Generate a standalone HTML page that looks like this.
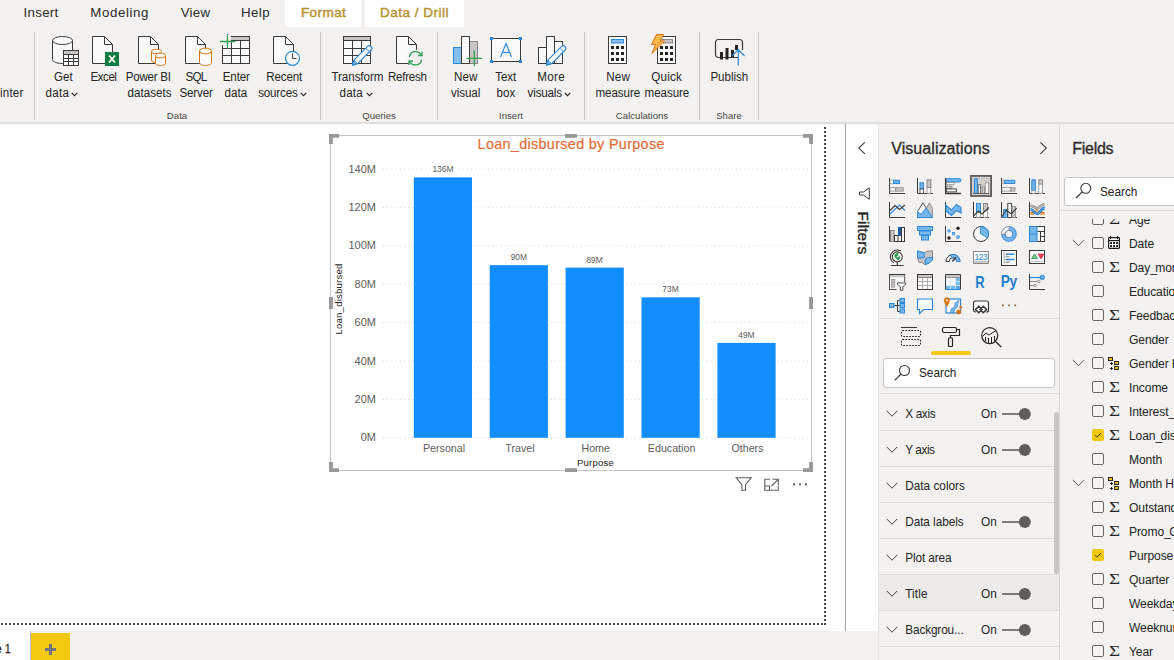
<!DOCTYPE html>
<html lang="en">
<head>
<meta charset="utf-8">
<title>Power BI Desktop</title>
<style>
*{box-sizing:border-box;margin:0;padding:0}
html,body{width:1174px;height:660px;overflow:hidden;background:#fff}
body{position:relative;font-family:"Liberation Sans",sans-serif;color:#252423;font-size:11.6px}
.abs{position:absolute}
.c{position:absolute;transform:translateX(-50%);white-space:nowrap;text-align:center}
.t{position:absolute;white-space:nowrap}
/* ribbon */
#ribbon{left:0;top:0;width:1174px;height:122px;background:#f3f2f1}
#ribbonline{left:0;top:121.7px;width:1174px;height:2.3px;background:#dfdedd}
.tab{position:absolute;top:4.8px;font-size:13.3px;color:#2b2a29;white-space:nowrap}
.tabw{position:absolute;top:0;height:27px;background:#fff}
.gold{color:#b5932f;font-size:13.5px;-webkit-text-stroke:0.45px #b5932f}
.rb{position:absolute;transform:translateX(-50%);white-space:nowrap;text-align:center;top:69px;line-height:16px;font-size:11.6px;color:#252423}
.rl{position:absolute;white-space:nowrap;font-size:11.6px;line-height:16px;color:#252423;transform:scaleY(1.07);transform-origin:0 76%}
.sep{position:absolute;top:32px;width:1px;height:88px;background:#c8c6c4}
.grp{position:absolute;transform:translateX(-50%);top:110px;font-size:9.6px;color:#484644;white-space:nowrap}
.dd{display:inline-block;vertical-align:0px;margin-left:0px}
.hd{font-size:16px;-webkit-text-stroke:0.32px #2d2c2b;color:#2d2c2b}
.fr{font-size:11.8px;line-height:14px;color:#252423;transform:scaleY(1.07);transform-origin:0 76%}
.fl{font-size:12.1px;line-height:15px;color:#252423;letter-spacing:-0.12px;transform:scaleY(1.06);transform-origin:0 76%}
.sg{font-family:"Liberation Serif","DejaVu Serif",serif;font-size:13.7px;line-height:18px;color:#252423;transform:scaleX(1.4);transform-origin:0 50%}
#s1,#s2{transform:scaleY(1.07);transform-origin:0 76%}
</style>
</head>
<body>
<!-- RIBBON -->
<div id="ribbon" class="abs"></div>
<div id="ribbonline" class="abs"></div>
<div class="tabw" style="left:285px;width:76px"></div>
<div class="tabw" style="left:365px;width:99px"></div>
<div class="tab" style="left:23.6px;letter-spacing:0.27px">Insert</div>
<div class="tab" style="left:90.3px;letter-spacing:0.60px">Modeling</div>
<div class="tab" style="left:180.7px;letter-spacing:0.28px">View</div>
<div class="tab" style="left:240.9px;letter-spacing:0.46px">Help</div>
<div class="tab gold" style="left:300.9px;letter-spacing:0.44px">Format</div>
<div class="tab gold" style="left:380.0px;letter-spacing:0.51px">Data / Drill</div>

<div class="t" style="left:0;top:84.7px;font-size:11.6px;line-height:16px;letter-spacing:0.2px;transform:scaleY(1.07);transform-origin:0 76%">inter</div>
<div class="sep" style="left:34px"></div>
<div class="sep" style="left:320px"></div>
<div class="sep" style="left:437px"></div>
<div class="sep" style="left:584px"></div>
<div class="sep" style="left:699px"></div>
<div class="sep" style="left:758px"></div>
<!--RL-START-->
<div class="rl" style="left:54.0px;top:69px;letter-spacing:0.04px">Get</div>
<div class="rl" style="left:45.5px;top:84.7px;letter-spacing:0.26px">data</div>
<svg class="abs" style="left:71.3px;top:91.9px" width="7" height="5" viewBox="0 0 7 5"><path d="M0.7 0.8L3.5 3.6L6.3 0.8" fill="none" stroke="#252423" stroke-width="1.15"/></svg>
<div class="rl" style="left:90.6px;top:69px;letter-spacing:-0.51px">Excel</div>
<div class="rl" style="left:125.8px;top:69px;letter-spacing:-0.28px">Power BI</div>
<div class="rl" style="left:127.6px;top:84.7px;letter-spacing:0.01px">datasets</div>
<div class="rl" style="left:185.5px;top:69px;letter-spacing:-0.77px">SQL</div>
<div class="rl" style="left:179.4px;top:84.7px;letter-spacing:-0.14px">Server</div>
<div class="rl" style="left:222.8px;top:69px;letter-spacing:-0.16px">Enter</div>
<div class="rl" style="left:224.5px;top:84.7px;letter-spacing:0.06px">data</div>
<div class="rl" style="left:266.3px;top:69px;letter-spacing:-0.14px">Recent</div>
<div class="rl" style="left:258.2px;top:84.7px;letter-spacing:-0.17px">sources</div>
<svg class="abs" style="left:300.4px;top:91.9px" width="7" height="5" viewBox="0 0 7 5"><path d="M0.7 0.8L3.5 3.6L6.3 0.8" fill="none" stroke="#252423" stroke-width="1.15"/></svg>
<div class="rl" style="left:331.5px;top:69px;letter-spacing:-0.07px">Transform</div>
<div class="rl" style="left:339.6px;top:84.7px;letter-spacing:0.16px">data</div>
<svg class="abs" style="left:365.6px;top:91.9px" width="7" height="5" viewBox="0 0 7 5"><path d="M0.7 0.8L3.5 3.6L6.3 0.8" fill="none" stroke="#252423" stroke-width="1.15"/></svg>
<div class="rl" style="left:387.9px;top:69px;letter-spacing:-0.26px">Refresh</div>
<div class="rl" style="left:454.0px;top:69px;letter-spacing:0.03px">New</div>
<div class="rl" style="left:450.9px;top:84.7px;letter-spacing:-0.04px">visual</div>
<div class="rl" style="left:495.2px;top:69px;letter-spacing:-0.09px">Text</div>
<div class="rl" style="left:496.4px;top:84.7px;letter-spacing:0.13px">box</div>
<div class="rl" style="left:537.3px;top:69px;letter-spacing:0.34px">More</div>
<div class="rl" style="left:527.6px;top:84.7px;letter-spacing:-0.16px">visuals</div>
<svg class="abs" style="left:564.3px;top:91.9px" width="7" height="5" viewBox="0 0 7 5"><path d="M0.7 0.8L3.5 3.6L6.3 0.8" fill="none" stroke="#252423" stroke-width="1.15"/></svg>
<div class="rl" style="left:606.3px;top:69px;letter-spacing:0.13px">New</div>
<div class="rl" style="left:595.5px;top:84.7px;letter-spacing:-0.07px">measure</div>
<div class="rl" style="left:651.3px;top:69px;letter-spacing:0.21px">Quick</div>
<div class="rl" style="left:644.6px;top:84.7px;letter-spacing:-0.07px">measure</div>
<div class="rl" style="left:710.4px;top:69px;letter-spacing:-0.03px">Publish</div>
<!--RL-END-->
<div class="grp" style="left:177px">Data</div>
<div class="grp" style="left:379px">Queries</div>
<div class="grp" style="left:511px">Insert</div>
<div class="grp" style="left:642px">Calculations</div>
<div class="grp" style="left:729px">Share</div>
<!--RIBBON-ICONS-START-->
<svg class="abs" style="left:0;top:0" width="1174" height="122" viewBox="0 0 1174 122" fill="none" stroke-linejoin="miter">
<defs>
<g id="page"><path d="M0.5 0.5H12.5L20.5 8.5V27.5H0.5Z" fill="#fafafa" stroke="#3b3a39" stroke-width="1"/><path d="M12.5 0.5V8.5H20.5" stroke="#3b3a39" stroke-width="1" fill="none"/></g>
<g id="pencil"><path d="M0 20L1.400 15L15.200 1.200A2.550 2.550 0 0 1 18.800 4.800L5 18.600Z" fill="#fafafa" stroke="#2b88d8" stroke-width="1.100" stroke-linejoin="round"/><path d="M0 20L1.400 15L5 18.600Z" fill="#69afe5" stroke="#2b88d8" stroke-width="1" stroke-linejoin="round"/><path d="M13.400 3L17 6.600" stroke="#2b88d8" stroke-width="1"/></g>
<g id="calcdots" fill="#252423" stroke="none"><rect x="0" y="0" width="3" height="3"/><rect x="5" y="0" width="3" height="3"/><rect x="10" y="0" width="3" height="3"/><rect x="0" y="6" width="3" height="3"/><rect x="5" y="6" width="3" height="3"/><rect x="10" y="6" width="3" height="3"/><rect x="0" y="12" width="3" height="3"/><rect x="5" y="12" width="3" height="3"/><rect x="10" y="12" width="3" height="3"/></g>
</defs>
<!-- Get data -->
<path d="M52.5 40.5V59.5C52.5 61.8 57 63.5 62.5 63.5S72.5 61.8 72.5 59.5V40.5" fill="#fafafa" stroke="#3b3a39"/>
<ellipse cx="62.5" cy="40.5" rx="10" ry="4" fill="#fafafa" stroke="#3b3a39"/>
<rect x="63.5" y="50.5" width="15" height="15" fill="#fafafa" stroke="#3b3a39"/>
<rect x="64" y="51" width="14" height="3" fill="#c8c6c4" stroke="none"/>
<path d="M63.5 54.5H78.5M63.5 58.5H78.5M63.5 61.5H78.5M68.5 54.5V65.5M73.5 54.5V65.5" stroke="#3b3a39"/>
<!-- Excel -->
<use href="#page" x="92" y="36"/>
<rect x="105" y="52" width="14" height="14" fill="#107c41" stroke="none"/>
<path d="M109 55.5L115 62.5M115 55.5L109 62.5" stroke="#fff" stroke-width="1.8"/>
<!-- Power BI datasets -->
<use href="#page" x="138" y="36"/>
<g stroke="#d87514" fill="#fafafa">
<path d="M151.500 52V60.500C151.500 61.600 153.500 62.500 156.500 62.500"/><ellipse cx="156.500" cy="51.500" rx="5" ry="2.200"/>
<path d="M155.500 56V63.500C155.500 64.700 157.700 65.500 160.500 65.500S165.500 64.700 165.500 63.500V56"/><ellipse cx="160.500" cy="55.500" rx="5" ry="2.300"/>
</g>
<!-- SQL Server -->
<use href="#page" x="185" y="36"/>
<g stroke="#d87514" fill="#fafafa"><path d="M199.500 51V62.500C199.500 64.200 202.200 65.500 205.500 65.500S211.500 64.200 211.500 62.500V51"/><ellipse cx="205.500" cy="51" rx="6" ry="2.800"/></g>
<!-- Enter data -->
<rect x="222.500" y="36.500" width="27" height="27" fill="#fafafa" stroke="#3b3a39"/>
<rect x="231" y="37" width="18" height="3.500" fill="#c8c6c4" stroke="none"/>
<path d="M222.500 40.500H249.500M222.500 48.500H249.500M222.500 55.500H249.500M231.500 40.500V63.500M240.500 40.500V63.500" stroke="#3b3a39"/>
<rect x="219" y="33" width="12" height="12" fill="#f3f2f1" stroke="none"/>
<path d="M220 41.500H235.500M227.500 34V48.500" stroke="#2f9e4f" stroke-width="1.300"/>
<!-- Recent sources -->
<use href="#page" x="273" y="36"/>
<circle cx="292.500" cy="58.300" r="7" fill="#fafafa" stroke="#2b88d8" stroke-width="1.200"/>
<path d="M292.500 53.500V58.500H296.500" stroke="#3b3a39"/>
<!-- Transform data -->
<rect x="343.500" y="36.500" width="27" height="27" fill="#fafafa" stroke="#3b3a39"/>
<rect x="344" y="37" width="26" height="3.500" fill="#c8c6c4" stroke="none"/>
<path d="M343.500 40.500H370.500M343.500 48.500H370.500M343.500 55.500H370.500M352.500 40.500V63.500M361.500 40.500V63.500" stroke="#3b3a39"/>
<use href="#pencil" x="352.400" y="45.200"/>
<!-- Refresh -->
<use href="#page" x="396" y="36"/>
<circle cx="415.500" cy="58.300" r="8.500" fill="#f3f2f1" stroke="none"/>
<path d="M409.300 57A6.400 6.400 0 0 1 421.500 55.500" stroke="#2f9e4f" stroke-width="1.300"/>
<path d="M421.700 59.600A6.400 6.400 0 0 1 409.500 61.100" stroke="#2f9e4f" stroke-width="1.300"/>
<path d="M418 55.500H422V51.500" stroke="#2f9e4f" stroke-width="1.300"/>
<path d="M413 61H409V65" stroke="#2f9e4f" stroke-width="1.300"/>
<!-- New visual -->
<rect x="469.500" y="41.500" width="8" height="22" fill="#c8c6c4" stroke="#8a8886"/>
<rect x="453.500" y="47.500" width="8.500" height="16" fill="#83beec" stroke="#2b88d8"/>
<rect x="461.500" y="36.500" width="8" height="27" fill="#fafafa" stroke="#3b3a39"/>
<path d="M466.500 58.300H482M474.300 50.500V66" stroke="#2f9e4f" stroke-width="1.300"/>
<!-- Text box -->
<rect x="491.500" y="38.500" width="29" height="23" fill="#fafafa" stroke="#3b3a39"/>
<g fill="#2b88d8" stroke="none"><rect x="490" y="37" width="3" height="3"/><rect x="519" y="37" width="3" height="3"/><rect x="490" y="60" width="3" height="3"/><rect x="519" y="60" width="3" height="3"/></g>
<path d="M500.500 57L506 43.500L511.500 57M502.500 52.500H509.500" stroke="#2b88d8" stroke-width="1.200"/>
<!-- More visuals -->
<rect x="538.500" y="47.500" width="8" height="16" fill="#fafafa" stroke="#3b3a39"/>
<rect x="554.500" y="41.500" width="8" height="22" fill="#fafafa" stroke="#3b3a39"/>
<rect x="546.500" y="36.500" width="8" height="27" fill="#fafafa" stroke="#3b3a39"/>
<use href="#pencil" x="546.400" y="45.200"/>
<!-- New measure -->
<rect x="608.500" y="36.500" width="18" height="27" fill="#fafafa" stroke="#3b3a39"/>
<rect x="611.500" y="39.500" width="12" height="3.500" fill="#83beec" stroke="#2b88d8"/>
<use href="#calcdots" x="611" y="46"/>
<!-- Quick measure -->
<rect x="657.500" y="36.500" width="18" height="27" fill="#fafafa" stroke="#3b3a39"/>
<rect x="660.500" y="39.500" width="12" height="3.500" fill="#c8c6c4" stroke="#8a8886"/>
<use href="#calcdots" x="660" y="46"/>
<path d="M656.500 34.500H663.500L660 41H664.500L652 53.500L655.500 44.500H651.500Z" fill="#f8b64c" stroke="#d87514" stroke-width="1"/>
<!-- Publish -->
<path d="M738 57.500H718.500a3 3 0 0 1 -3 -3V42.500a3 3 0 0 1 3 -3H739.500a3 3 0 0 1 3 3V50" stroke="#3b3a39" stroke-width="1.200"/>
<g fill="#252423" stroke="none"><rect x="720" y="52" width="3" height="7.500"/><rect x="725.500" y="48" width="3" height="11.500"/><rect x="731" y="50" width="3" height="7"/><rect x="735" y="45" width="3" height="5"/></g>
<path d="M738.300 65.500V50M732 56L738.300 49.700L744.600 56" stroke="#2b88d8" stroke-width="1.200"/>
</svg>
<!--RIBBON-ICONS-END-->

<!--CANVAS-START-->
<div class="abs" style="left:0;top:124px;width:846px;height:507px;background:#fff"></div>
<div class="abs" style="left:824px;top:127px;width:2px;height:498px;background:repeating-linear-gradient(180deg,#444 0,#444 2px,transparent 2px,transparent 4px)"></div>
<div class="abs" style="left:-3px;top:623px;width:826px;height:2px;background:repeating-linear-gradient(90deg,#444 0,#444 2px,transparent 2px,transparent 4px)"></div>
<div class="abs" style="left:845px;top:124px;width:1px;height:507px;background:#a19f9d"></div>
<svg class="abs" style="left:0;top:124px" width="846" height="507" viewBox="0 124 846 507" font-family="'Liberation Sans',sans-serif">
<rect x="330.5" y="135.5" width="481" height="335" fill="#fff" stroke="#c4c4c4" stroke-width="1"/>
<line x1="383" x2="808" y1="437.8" y2="437.8" stroke="#d9d8d6" stroke-width="1" stroke-dasharray="1 3.2"/>
<text x="376" y="441.2" text-anchor="end" font-size="11" fill="#605e5c">0M</text>
<line x1="383" x2="808" y1="399.4" y2="399.4" stroke="#d9d8d6" stroke-width="1" stroke-dasharray="1 3.2"/>
<text x="376" y="402.8" text-anchor="end" font-size="11" fill="#605e5c">20M</text>
<line x1="383" x2="808" y1="361.0" y2="361.0" stroke="#d9d8d6" stroke-width="1" stroke-dasharray="1 3.2"/>
<text x="376" y="365" text-anchor="end" font-size="11" fill="#605e5c">40M</text>
<line x1="383" x2="808" y1="322.6" y2="322.6" stroke="#d9d8d6" stroke-width="1" stroke-dasharray="1 3.2"/>
<text x="376" y="326.0" text-anchor="end" font-size="11" fill="#605e5c">60M</text>
<line x1="383" x2="808" y1="284.2" y2="284.2" stroke="#d9d8d6" stroke-width="1" stroke-dasharray="1 3.2"/>
<text x="376" y="287.6" text-anchor="end" font-size="11" fill="#605e5c">80M</text>
<line x1="383" x2="808" y1="245.8" y2="245.8" stroke="#d9d8d6" stroke-width="1" stroke-dasharray="1 3.2"/>
<text x="376" y="249.2" text-anchor="end" font-size="11" fill="#605e5c">100M</text>
<line x1="383" x2="808" y1="207.4" y2="207.4" stroke="#d9d8d6" stroke-width="1" stroke-dasharray="1 3.2"/>
<text x="376" y="210.8" text-anchor="end" font-size="11" fill="#605e5c">120M</text>
<line x1="383" x2="808" y1="169.0" y2="169.0" stroke="#d9d8d6" stroke-width="1" stroke-dasharray="1 3.2"/>
<text x="376" y="173" text-anchor="end" font-size="11" fill="#605e5c">140M</text>
<rect x="413.8" y="177.40" width="58.2" height="260.40" fill="#118dff"/>
<rect x="429.9" y="164.4" width="26" height="10" fill="#fff"/><text x="442.9" y="172.4" text-anchor="middle" font-size="8.4" fill="#605e5c">136M</text>
<text x="444.0" y="452" text-anchor="middle" font-size="10.7" fill="#605e5c">Personal</text>
<rect x="489.7" y="265.15" width="58.2" height="172.65" fill="#118dff"/>
<rect x="505.8" y="252.1" width="26" height="10" fill="#fff"/><text x="518.8" y="260.1" text-anchor="middle" font-size="8.4" fill="#605e5c">90M</text>
<text x="519.9" y="452" text-anchor="middle" font-size="10.7" fill="#605e5c">Travel</text>
<rect x="565.6" y="267.60" width="58.2" height="170.20" fill="#118dff"/>
<rect x="581.6" y="254.6" width="26" height="10" fill="#fff"/><text x="594.6" y="262.6" text-anchor="middle" font-size="8.4" fill="#605e5c">89M</text>
<text x="595.7" y="452" text-anchor="middle" font-size="10.7" fill="#605e5c">Home</text>
<rect x="641.5" y="297.30" width="58.2" height="140.50" fill="#118dff"/>
<rect x="657.5" y="284.3" width="26" height="10" fill="#fff"/><text x="670.5" y="292.3" text-anchor="middle" font-size="8.4" fill="#605e5c">73M</text>
<text x="671.6" y="452" text-anchor="middle" font-size="10.7" fill="#605e5c">Education</text>
<rect x="717.4" y="342.90" width="58.2" height="94.90" fill="#118dff"/>
<rect x="733.4" y="329.9" width="26" height="10" fill="#fff"/><text x="746.4" y="337.9" text-anchor="middle" font-size="8.4" fill="#605e5c">49M</text>
<text x="747.5" y="452" text-anchor="middle" font-size="10.7" fill="#605e5c">Others</text>
<text x="595.5" y="466.3" text-anchor="middle" font-size="9.6" fill="#252423" letter-spacing="0.2">Purpose</text>
<text transform="translate(341.8,299) rotate(-90)" text-anchor="middle" font-size="9.6" fill="#252423" letter-spacing="0.2">Loan_disbursed</text>
<text x="571.2" y="148.9" text-anchor="middle" font-size="14.4" fill="#e66c37" letter-spacing="0.32" stroke="#e66c37" stroke-width="0.2">Loan_disbursed by Purpose</text>
<g fill="#999999">
<path d="M329 134h10v3.800h-6.100v6.100h-3.900z"/>
<path d="M813 134h-10v3.800h6.100v6.100h3.900z"/>
<path d="M329 472h10v-3.800h-6.100v-6.100h-3.900z"/>
<path d="M813 472h-10v-3.800h6.100v-6.100h3.900z"/>
<rect x="565" y="134" width="12" height="3.800"/>
<rect x="565" y="468.200" width="12" height="3.800"/>
<rect x="329" y="297" width="3.900" height="12"/>
<rect x="809.100" y="297" width="3.900" height="12"/>
</g>
<g fill="none" stroke="#605e5c" stroke-width="1.1">
<path d="M736.2 477.8H751.2L745.5 484.6V490.3H741.9V484.6Z"/>
<path d="M770 479.3H764.8V490.3H778.3V485.5M764.8 486H769.5V490.3M772.5 479.3H778.3V485M778.3 479.3L771.5 486"/>
</g>
<g fill="#605e5c"><rect x="793" y="483.3" width="2" height="2"/><rect x="799" y="483.3" width="2" height="2"/><rect x="805" y="483.3" width="2" height="2"/></g>
</svg>
<!--CANVAS-END-->

<!--PANES-START-->
<div class="abs" style="left:846px;top:124px;width:32px;height:507px;background:#fff"></div>
<div class="abs" style="left:878px;top:124px;width:296px;height:536px;background:#f3f2f1"></div>
<div class="abs" style="left:878px;top:124px;width:1px;height:536px;background:#e6e5e3"></div>
<div class="abs" style="left:1059px;top:124px;width:1px;height:536px;background:#dddbd9"></div>
<svg class="abs" style="left:846px;top:124px" width="32" height="140" viewBox="846 124 32 140" fill="none"><path d="M864.800 142.300L858.800 148.100L864.800 153.900" stroke="#3b3a39" stroke-width="1.100"/><path d="M869.300 187.800V199.300L863.500 195H859.500V192H863.500Z" stroke="#3b3a39" stroke-width="1" stroke-linejoin="round"/></svg>
<div class="t" id="filters" style="left:862.500px;top:233px;font-size:15.500px;transform:translate(-50%,-50%) rotate(90deg);-webkit-text-stroke:0.350px #252423;letter-spacing:0.100px">Filters</div>
<div class="t hd" id="vizhd" style="left:891.200px;top:139.500px;letter-spacing:0.070px">Visualizations</div>
<svg class="abs" style="left:1036px;top:140px" width="14" height="16" viewBox="0 0 14 16" fill="none"><path d="M4.300 2.300L10.300 8.100L4.300 13.900" stroke="#3b3a39" stroke-width="1.100"/></svg>
<svg class="abs" style="left:880px;top:170px" width="178" height="150" viewBox="880 170 178 150" fill="none" shape-rendering="auto">
<g transform="translate(889,178)"><path d="M0.5 0V15.5H16" stroke="#3b3a39" fill="none"/><rect x="1" y="2" width="3.300" height="3.800" fill="#fafafa" stroke="#8a8886" stroke-width="0.600"/><rect x="4.500" y="2.300" width="6" height="3.200" fill="#77b7ec" stroke="#2b88d8" stroke-width="1.100"/><rect x="1" y="9.700" width="5.400" height="3.400" fill="#fafafa" stroke="#8a8886" stroke-width="0.800" /><rect x="6.800" y="9.700" width="7.400" height="3.400" fill="#c8c6c4" stroke="#8a8886" stroke-width="0.800"/></g>
<g transform="translate(917,178)"><path d="M0.5 0V15.5H16" stroke="#3b3a39" fill="none"/><rect x="3" y="4.800" width="3.400" height="6.200" fill="#77b7ec" stroke="#2b88d8" stroke-width="1.100"/><rect x="3" y="11" width="3.400" height="4.500" fill="#fafafa" stroke="#3b3a39" stroke-width="0.800"/><rect x="10" y="1.800" width="3.800" height="7.600" fill="#c8c6c4" stroke="#8a8886"/><rect x="10" y="9.400" width="3.800" height="6.100" fill="#fafafa" stroke="#8a8886" stroke-width="0.800"/></g>
<g transform="translate(945,178)"><rect x="1.300" y="0.700" width="14.400" height="3.200" rx="0.800" fill="#77b7ec" stroke="#2b88d8" stroke-width="1"/><rect x="1.300" y="4.400" width="8.300" height="2" fill="#fafafa" stroke="#8a8886" stroke-width="0.700"/><rect x="1.300" y="8" width="5.700" height="2.300" fill="#c8c6c4" stroke="#8a8886" stroke-width="0.800"/><rect x="1.300" y="11" width="10" height="2.900" fill="#fafafa" stroke="#3b3a39" stroke-width="0.900"/><path d="M0.600 0V15.500H16" stroke="#3b3a39" fill="none" stroke-width="1.300"/></g>
<g transform="translate(973,178)"><rect x="-2" y="-2.100" width="20.100" height="20.100" fill="#d0cecc" stroke="#5f5d5b" stroke-width="1.800"/><rect x="1.500" y="0.800" width="2.800" height="14.700" fill="#77b7ec" stroke="#2b88d8" stroke-width="1"/><rect x="5.200" y="6.800" width="2.500" height="8.700" fill="#fafafa" stroke="#3b3a39" stroke-width="0.700"/><rect x="9" y="8.800" width="2.600" height="6.700" fill="#c8c6c4" stroke="#8a8886" stroke-width="0.800"/><rect x="12.400" y="4.900" width="3" height="10.600" fill="#fafafa" stroke="#8a8886" stroke-width="0.700"/><path d="M0 15.500H16.200" stroke="#5f5d5b"/></g>
<g transform="translate(1001,178)"><path d="M0.5 0V15.5H16" stroke="#3b3a39" fill="none"/><rect x="1" y="2" width="2.100" height="3.800" fill="#fafafa" stroke="#8a8886" stroke-width="0.600"/><rect x="3.500" y="2.200" width="10.300" height="3.300" rx="0.600" fill="#77b7ec" stroke="#2b88d8" stroke-width="1.100"/><rect x="1" y="9.700" width="8.800" height="3.400" fill="#fafafa" stroke="#8a8886" stroke-width="0.800"/><rect x="10" y="9.700" width="4" height="3.400" fill="#c8c6c4" stroke="#8a8886" stroke-width="0.800"/></g>
<g transform="translate(1029,178)"><path d="M0.5 0V15.5H16" stroke="#3b3a39" fill="none"/><rect x="2.800" y="1.900" width="3.500" height="10.700" rx="0.500" fill="#77b7ec" stroke="#2b88d8" stroke-width="1.100"/><rect x="2.800" y="12.800" width="3.500" height="2.700" fill="#fafafa" stroke="#8a8886" stroke-width="0.700"/><rect x="9.800" y="1.800" width="3.800" height="4.400" fill="#c8c6c4" stroke="#8a8886" stroke-width="0.900"/><rect x="9.800" y="6.200" width="3.800" height="9.300" fill="#fafafa" stroke="#8a8886" stroke-width="0.800"/></g>
<g transform="translate(889,202)"><path d="M0.5 0V15.5H16" stroke="#3b3a39" fill="none"/><path d="M1 12L10.500 3L16 8.500" stroke="#2b88d8" fill="none" stroke-width="1.100"/><path d="M1 8.500L6 3.500L10.500 7.500L16 3" stroke="#3b3a39" fill="none" stroke-width="1.100"/></g>
<g transform="translate(917,202)"><path d="M0.500 15.500V9.500L6 0.800L11 9Z" fill="#fafafa" stroke="#3b3a39" stroke-width="0.900" stroke-linejoin="round"/><path d="M9.300 6.200L12.500 0.800L15.500 6.500V15.500H9Z" fill="#c8c6c4" stroke="#8a8886" stroke-width="0.900" stroke-linejoin="round"/><path d="M0.500 15.500V9.700L4 12.300L9.200 6L15.500 15.500Z" fill="#77b7ec" stroke="#2b88d8" stroke-linejoin="round"/></g>
<g transform="translate(945,202)"><path d="M0.5 0V15.5H16" stroke="#3b3a39" fill="none"/><path d="M1 3.500L6.500 8L11.500 2.500L16 5.500V11L11.500 8.500L6.500 13.500L1 9Z" fill="#77b7ec" stroke="#2b88d8" stroke-width="1.100"/></g>
<g transform="translate(973,202)"><path d="M0.5 0V15.5H16" stroke="#3b3a39" fill="none"/><rect x="3.500" y="1.500" width="4" height="9" fill="#77b7ec" stroke="#2b88d8"/><rect x="3.500" y="10.500" width="4" height="5" fill="#fafafa" stroke="#8a8886" stroke-width="0.700"/><rect x="10.500" y="1.500" width="4" height="7" fill="#c8c6c4" stroke="#8a8886"/><rect x="10.500" y="8.500" width="4" height="7" fill="#fafafa" stroke="#8a8886" stroke-width="0.700"/><path d="M1 13.500L5.500 9L9 12L16 5.500" stroke="#3b3a39" fill="none" stroke-width="1.100"/></g>
<g transform="translate(1001,202)"><path d="M0.5 0V15.5H16" stroke="#3b3a39" fill="none"/><rect x="2.600" y="7.600" width="3.900" height="7.900" fill="#77b7ec" stroke="#2b88d8"/><rect x="6.800" y="1.300" width="3.700" height="14.200" fill="#fafafa" stroke="#3b3a39" stroke-width="0.900"/><rect x="11" y="4.600" width="3.600" height="10.900" fill="#c8c6c4" stroke="#8a8886" stroke-width="0.900"/><path d="M0.800 14.800L5.200 8.200L10.300 11.700L15.700 6.200" stroke="#3b3a39" fill="none" stroke-width="1.100"/></g>
<g transform="translate(1029,202)"><rect x="1.500" y="10" width="3.600" height="2.700" fill="#e8760a"/><rect x="11.300" y="10" width="4.300" height="2.700" fill="#e8760a"/><path d="M2.300 11.400H4.500M12.200 11.400H15" stroke="#f9c47a" stroke-width="0.800"/><rect x="6.400" y="7" width="3.200" height="2.800" fill="#f5a742"/><path d="M1.500 3.600C4 3.600 5.500 6.200 8 6.200S11.500 2.300 15.500 2.300" fill="none" stroke="#8a8886" stroke-width="2.600"/><path d="M1.500 3.600C4 3.600 5.500 6.200 8 6.200S11.500 2.300 15.500 2.300" fill="none" stroke="#c8c6c4" stroke-width="1.100"/><path d="M1.500 7.300C4.500 7.300 5 11.800 8.200 11.800S11.500 6 15.700 6" fill="none" stroke="#1f78c8" stroke-width="2.800"/><path d="M1.500 7.300C4.500 7.300 5 11.800 8.200 11.800S11.500 6 15.700 6" fill="none" stroke="#77b7ec" stroke-width="0.900"/><path d="M0.5 0V15.5H16" stroke="#3b3a39" fill="none"/></g>
<g transform="translate(889,226)"><path d="M0.5 0V15.5H16" stroke="#3b3a39" fill="none"/><rect x="1.500" y="4.500" width="3.500" height="11" fill="#c8c6c4" stroke="#8a8886"/><rect x="5.500" y="9.500" width="3.500" height="6" fill="#fafafa" stroke="#3b3a39"/><rect x="9" y="1" width="3" height="9" fill="#1b5fa8" stroke="none"/><rect x="12.500" y="1.500" width="3" height="14" fill="#fafafa" stroke="#3b3a39"/></g>
<g transform="translate(917,226)"><rect x="0.500" y="0.500" width="15" height="4" fill="#77b7ec" stroke="#2b88d8"/><rect x="2.500" y="5" width="11" height="4" fill="#77b7ec" stroke="#2b88d8"/><rect x="4.500" y="9.500" width="7" height="4.500" fill="#77b7ec" stroke="#2b88d8"/></g>
<g transform="translate(945,226)"><path d="M0.5 0V15.5H16" stroke="#3b3a39" fill="none"/><circle cx="4" cy="5" r="1.400" fill="#77b7ec" stroke="#2b88d8" stroke-width="0.600"/><rect x="7.300" y="6.300" width="2.500" height="2.500" fill="#77b7ec" stroke="#2b88d8" stroke-width="0.600"/><circle cx="13" cy="11" r="1.600" fill="#77b7ec" stroke="#2b88d8" stroke-width="0.600"/><circle cx="13" cy="2.300" r="1.700" fill="#252423"/><circle cx="4" cy="12" r="1.700" fill="#252423"/></g>
<g transform="translate(973,226)"><circle cx="8" cy="8" r="7.500" fill="#fafafa" stroke="#3b3a39"/><path d="M8 0.500A7.500 7.500 0 0 1 14.500 11.800L7.500 7.500Z" fill="#77b7ec" stroke="#2b88d8" stroke-linejoin="round"/></g>
<g transform="translate(1001,226)"><circle cx="8" cy="8" r="5.500" fill="none" stroke="#2b88d8" stroke-width="4.600"/><circle cx="8" cy="8" r="5.500" fill="none" stroke="#77b7ec" stroke-width="2.800"/><path d="M0.400 8A7.600 7.600 0 0 1 8 0.400V4.300A3.700 3.700 0 0 0 4.300 8Z" fill="#fafafa" stroke="#8a8886" stroke-width="0.800"/></g>
<g transform="translate(1029,226)"><rect x="0.500" y="0.500" width="15" height="15" fill="#fafafa" stroke="#3b3a39"/><rect x="0.500" y="0.500" width="7.500" height="15" fill="#77b7ec" stroke="#2b88d8"/><path d="M0.500 8H8" stroke="#2b88d8"/><path d="M8.500 5.500H15.500M11.500 5.500V15.500M11.500 10.500H15.500" stroke="#3b3a39"/></g>
<g transform="translate(889,250)"><circle cx="8.300" cy="6.900" r="5" fill="#fafafa" stroke="#3b3a39" stroke-width="1.100"/><path d="M6.300 3.800L8.200 2.800L9.700 3.600L8.800 5.300L10.500 5.800L11.300 7.600L10 9.800L8.300 10.200L7.500 8.300L5.800 7.800L5.300 5.600Z" fill="#2f9e4f"/><path d="M7.800 5.800H9.800V7H7.800Z" fill="#fafafa"/><path d="M11.750 0.920A6.900 6.900 0 0 0 4.850 12.880" fill="none" stroke="#3b3a39" stroke-width="1.100"/><path d="M8.300 12V15.300M2.100 15.500H14.600" stroke="#3b3a39" stroke-width="1.100"/></g>
<g transform="translate(917,250)"><path d="M0.500 1L4 2L7.400 2.600L10 1.200L15.500 0.800V10L12 13L8 14.800L5 12.500L2 12.500L0.500 8Z" fill="#c8c6c4" stroke="#8a8886" stroke-linejoin="round"/><path d="M0.500 1L4 2L7 2.600L7.300 7.600L3 8.200L0.500 7.600Z" fill="#77b7ec" stroke="#2b88d8" stroke-linejoin="round"/><path d="M9 8.300L15.500 7.200V10L12 13L8.500 14.500L8 11Z" fill="#77b7ec" stroke="#2b88d8" stroke-linejoin="round"/></g>
<g transform="translate(945,250)"><path d="M1 11.500A7 7 0 0 1 15 11.500H11.800A3.800 3.800 0 0 0 4.200 11.500Z" fill="#fafafa" stroke="#3b3a39" stroke-linejoin="round"/><path d="M5.300 5A7 7 0 0 1 15 11.500H11.800A3.800 3.800 0 0 0 7 8Z" fill="#77b7ec" stroke="#2b88d8" stroke-linejoin="round"/><path d="M7.500 11.500L11 7" stroke="#3b3a39" stroke-width="1.500"/></g>
<g transform="translate(973,250)"><rect x="0.500" y="1.500" width="15" height="12" fill="#fafafa" stroke="#8a8886"/><rect x="1" y="11" width="14" height="2" fill="#c8c6c4"/><text x="8" y="10.300" font-size="8.400" text-anchor="middle" fill="#2b88d8" font-family="'Liberation Sans',sans-serif" letter-spacing="-0.400">123</text></g>
<g transform="translate(1001,250)"><rect x="0.500" y="0.500" width="15" height="15" fill="#fafafa" stroke="#3b3a39"/><path d="M3.200 2.500V13.500" stroke="#c8c6c4" stroke-width="1.500"/><path d="M4.600 4.200H13.400M4.600 9.600H13.400" stroke="#2b88d8" stroke-width="1.500"/><path d="M4.600 6.700H8.500M4.600 12.100H8.500" stroke="#8a8886" stroke-width="1.100"/></g>
<g transform="translate(1029,250)"><rect x="0.500" y="0.500" width="15" height="13" fill="#fafafa" stroke="#3b3a39"/><path d="M2.500 8.500L5.500 4L8.500 8.500Z" fill="#7fd08a" stroke="#2f9e4f" stroke-width="0.900"/><path d="M9 4L15 4L12 9Z" fill="#e8384f" stroke="#d13438" stroke-width="0.600"/><path d="M2 11.500H14" stroke="#c8c6c4"/></g>
<g transform="translate(889,274)"><rect x="0.500" y="0.500" width="15.200" height="15" fill="#fafafa" stroke="#3b3a39" stroke-width="0.900"/><rect x="1" y="1" width="14.200" height="2.300" fill="#c8c6c4"/><path d="M0.500 0.500H15.700" stroke="#3b3a39"/><rect x="2.600" y="5.500" width="3.200" height="3.200" fill="#c8c6c4" stroke="#8a8886" stroke-width="0.700"/><rect x="2.600" y="9.900" width="3.200" height="3.200" fill="#c8c6c4" stroke="#8a8886" stroke-width="0.700"/><path d="M7.500 8H17.500V16.800H7.500Z" fill="#f3f2f1" stroke="none"/><path d="M8.400 8.900H16.800V10.200L13.800 12.700V16.300H11.400V12.700L8.400 10.200Z" fill="#fafafa" stroke="#3b3a39" stroke-width="0.900" stroke-linejoin="round"/></g>
<g transform="translate(917,274)"><rect x="0.500" y="0.500" width="15" height="15" fill="#fafafa" stroke="#3b3a39"/><rect x="1" y="1" width="14" height="2.500" fill="#c8c6c4"/><path d="M0.500 7.500H15.500M0.500 11.500H15.500M5.500 3.500V15.500M10.500 3.500V15.500" stroke="#a8a6a4" stroke-width="0.900"/><path d="M0.500 3.500H15.500" stroke="#8a8886"/><rect x="0.500" y="0.500" width="15" height="15" fill="none" stroke="#3b3a39"/></g>
<g transform="translate(945,274)"><rect x="0.500" y="0.500" width="15" height="15" fill="#fafafa" stroke="none"/><rect x="1" y="1" width="14" height="2.500" fill="#c8c6c4"/><rect x="10.500" y="3.500" width="5" height="12" fill="#77b7ec"/><rect x="0.500" y="11.500" width="15" height="4" fill="#77b7ec"/><rect x="10.500" y="11.500" width="5" height="4" fill="#58a6e6"/><path d="M0.500 7.500H15.500M0.500 11.500H15.500M5.500 3.500V15.500M10.500 3.500V15.500" stroke="#d6e9f8" stroke-width="0.900"/><path d="M0.500 3.500H15.500" stroke="#8a8886" stroke-width="0.800"/><path d="M0.500 15.500V0.500H15.500V15.500" stroke="#3b3a39" fill="none"/><path d="M0.500 15.500H15.500" stroke="#2b88d8"/></g>
<g transform="translate(973,274)"><text transform="translate(7,14.200) scale(0.86,1.1)" font-size="15" font-weight="bold" text-anchor="middle" fill="#1f7fcf" font-family="'Liberation Sans',sans-serif">R</text></g>
<g transform="translate(1001,274)"><text transform="translate(7.800,12.600) scale(0.95,1.12)" font-size="14.5" font-weight="bold" text-anchor="middle" fill="#1f7fcf" font-family="'Liberation Sans',sans-serif" letter-spacing="-0.3">Py</text></g>
<g transform="translate(1029,274)"><path d="M0.500 0V15.500H16" stroke="#3b3a39" fill="none"/><path d="M1 3.500H12" stroke="#2b88d8" stroke-width="1.200"/><circle cx="13.300" cy="3.300" r="2" fill="#77b7ec" stroke="#2b88d8" stroke-width="1.100"/><path d="M1 7.500H8.500" stroke="#8a8886"/><circle cx="9.700" cy="7.500" r="1.300" fill="#fafafa" stroke="#8a8886"/><path d="M1 11.500H5" stroke="#8a8886"/><circle cx="6" cy="11.500" r="1.200" fill="#fafafa" stroke="#8a8886"/></g>
<g transform="translate(889,298)"><path d="M5 7.500H8.500M8.500 2.500V13.500M8.500 2.500H11M8.500 7.500H11M8.500 13.500H11" stroke="#3b3a39" fill="none"/><rect x="0.500" y="5.500" width="4.500" height="4" fill="#77b7ec" stroke="#2b88d8"/><rect x="11" y="0.500" width="4.500" height="4" fill="#77b7ec" stroke="#2b88d8"/><rect x="11" y="5.500" width="4.500" height="4" fill="#77b7ec" stroke="#2b88d8"/><rect x="11" y="11" width="4.500" height="4" fill="#77b7ec" stroke="#2b88d8"/></g>
<g transform="translate(917,298)"><path d="M0.500 1H15.500V11.500H6.500L2.500 15.500V11.500H0.500Z" fill="#fafafa" stroke="#2b88d8" stroke-width="1.200" stroke-linejoin="miter"/></g>
<g transform="translate(945,298)"><rect x="1" y="1" width="14.500" height="14" fill="#fafafa" stroke="#2b88d8" stroke-width="1.200"/><path d="M14 2L10 5L9.500 9L6 11L5.500 14.500H9L10 11L12.500 9L13 5.500Z" fill="#77b7ec" stroke="#2b88d8" stroke-width="0.600"/><path d="M-0.800 2.200A2.650 2.650 0 0 1 4.500 2.200C4.500 4.600 1.850 8.500 1.850 8.500S-0.800 4.600 -0.800 2.200Z" fill="#d87514" stroke="#d87514" stroke-width="0.600"/><circle cx="1.850" cy="2.300" r="1" fill="#fafafa"/><circle cx="13.700" cy="14" r="2.400" fill="#d87514"/><circle cx="15.700" cy="9.300" r="1.400" fill="#d87514"/></g>
<g transform="translate(973,298)"><path d="M3 14H2.500a2 2 0 0 1 -2 -2V5a2 2 0 0 1 2 -2H13.500a2 2 0 0 1 2 2V12a2 2 0 0 1 -2 2H13" fill="#fafafa" stroke="#3b3a39" stroke-width="1.200"/><path d="M2.500 11.500L5.700 8.300L8.900 11.500L5.700 14.700Z M7.100 11.500L10.300 8.300L13.500 11.500L10.300 14.700Z" fill="none" stroke="#3b3a39" stroke-width="1.600" stroke-linejoin="miter"/></g>
<g transform="translate(1001,298)"><rect x="1" y="6.500" width="1.700" height="1.700" fill="#9a5a2a"/><rect x="7.200" y="6.500" width="1.700" height="1.700" fill="#9a5a2a"/><rect x="13.400" y="6.500" width="1.700" height="1.700" fill="#9a5a2a"/></g>
</svg>
<div class="abs" style="left:879px;top:318px;width:180px;height:1px;background:#e1dfdd"></div>
<svg class="abs" style="left:895px;top:322px" width="112" height="34" viewBox="895 322 112 34" fill="none">
<path d="M901 327.500H917" stroke="#3b3a39" stroke-width="1.100"/>
<rect x="901.500" y="330.500" width="19" height="6" rx="1" stroke="#252423" stroke-width="1.100" stroke-dasharray="1.700 1.250"/>
<rect x="901.500" y="339.500" width="19" height="6" rx="1" stroke="#252423" stroke-width="1.100" stroke-dasharray="1.700 1.250"/>
<rect x="942.500" y="327.500" width="14" height="5" rx="1.500" stroke="#252423" stroke-width="1.200"/>
<path d="M956.500 329.500H959.500V335.500H950.500V338" stroke="#252423" stroke-width="1.200"/>
<rect x="948.500" y="338" width="4" height="8.500" rx="0.800" stroke="#252423" stroke-width="1.200"/>
<circle cx="989.700" cy="335.600" r="8" stroke="#252423" stroke-width="1.200"/>
<path d="M995.500 341.500L1001.300 347" stroke="#252423" stroke-width="1.200"/>
<path d="M982.500 336.500L986 333L989 335L996 330.500" stroke="#252423" stroke-width="1"/>
<path d="M985.500 337V341.500M988.500 338V343M991.500 337V343M994.500 336V341" stroke="#252423" stroke-width="1"/>
<rect x="931" y="351" width="40" height="4" rx="2" fill="#f2c811"/>
</svg>
<div class="abs" style="left:883px;top:358px;width:172px;height:30px;background:#fff;border:1px solid #c8c6c4;border-radius:3px"></div><svg class="abs" style="left:893px;top:363px" width="20" height="20" viewBox="0 0 20 20" fill="none"><circle cx="11.500" cy="7.500" r="5" stroke="#3b3a39" stroke-width="1.100"/><path d="M8 11L1.700 17.300" stroke="#3b3a39" stroke-width="1.200"/></svg><div class="t" id="s1" style="left:919px;top:366px;font-size:11.800px">Search</div>
<div class="abs" style="left:879px;top:393px;width:180px;height:1px;background:#e1dfdd"></div>
<div class="abs" style="left:879px;top:430px;width:180px;height:1px;background:#e1dfdd"></div>
<svg class="abs" style="left:886px;top:410px" width="12" height="8" viewBox="0 0 12 8" fill="none"><path d="M0.800 1L6 6.200L11.200 1" stroke="#3b3a39" stroke-width="1"/></svg>
<div class="t fr" style="left:905.200px;top:407px;letter-spacing:-0.34px">X axis</div>
<div class="t fr" style="left:981px;top:407px">On</div>
<svg class="abs" style="left:1000px;top:407px" width="34" height="14" viewBox="0 0 34 14"><path d="M2 7H20" stroke="#605e5c" stroke-width="1.600"/><circle cx="24.800" cy="7" r="6" fill="#605e5c"/></svg>
<div class="abs" style="left:879px;top:466px;width:180px;height:1px;background:#e1dfdd"></div>
<svg class="abs" style="left:886px;top:446px" width="12" height="8" viewBox="0 0 12 8" fill="none"><path d="M0.800 1L6 6.200L11.200 1" stroke="#3b3a39" stroke-width="1"/></svg>
<div class="t fr" style="left:905.200px;top:443px;letter-spacing:-0.42px">Y axis</div>
<div class="t fr" style="left:981px;top:443px">On</div>
<svg class="abs" style="left:1000px;top:443px" width="34" height="14" viewBox="0 0 34 14"><path d="M2 7H20" stroke="#605e5c" stroke-width="1.600"/><circle cx="24.800" cy="7" r="6" fill="#605e5c"/></svg>
<div class="abs" style="left:879px;top:502px;width:180px;height:1px;background:#e1dfdd"></div>
<svg class="abs" style="left:886px;top:482px" width="12" height="8" viewBox="0 0 12 8" fill="none"><path d="M0.800 1L6 6.200L11.200 1" stroke="#3b3a39" stroke-width="1"/></svg>
<div class="t fr" style="left:905.200px;top:479px;letter-spacing:0.01px">Data colors</div>
<div class="abs" style="left:879px;top:538px;width:180px;height:1px;background:#e1dfdd"></div>
<svg class="abs" style="left:886px;top:518px" width="12" height="8" viewBox="0 0 12 8" fill="none"><path d="M0.800 1L6 6.200L11.200 1" stroke="#3b3a39" stroke-width="1"/></svg>
<div class="t fr" style="left:905.200px;top:515px;letter-spacing:-0.06px">Data labels</div>
<div class="t fr" style="left:981px;top:515px">On</div>
<svg class="abs" style="left:1000px;top:515px" width="34" height="14" viewBox="0 0 34 14"><path d="M2 7H20" stroke="#605e5c" stroke-width="1.600"/><circle cx="24.800" cy="7" r="6" fill="#605e5c"/></svg>
<div class="abs" style="left:879px;top:574px;width:180px;height:1px;background:#e1dfdd"></div>
<svg class="abs" style="left:886px;top:554px" width="12" height="8" viewBox="0 0 12 8" fill="none"><path d="M0.800 1L6 6.200L11.200 1" stroke="#3b3a39" stroke-width="1"/></svg>
<div class="t fr" style="left:905.200px;top:551px;letter-spacing:-0.11px">Plot area</div>
<div class="abs" style="left:879px;top:575px;width:180px;height:36px;background:#edebe9"></div>
<div class="abs" style="left:879px;top:610px;width:180px;height:1px;background:#e1dfdd"></div>
<svg class="abs" style="left:886px;top:590px" width="12" height="8" viewBox="0 0 12 8" fill="none"><path d="M0.800 1L6 6.200L11.200 1" stroke="#3b3a39" stroke-width="1"/></svg>
<div class="t fr" style="left:905.200px;top:587px;letter-spacing:0.13px">Title</div>
<div class="t fr" style="left:981px;top:587px">On</div>
<svg class="abs" style="left:1000px;top:587px" width="34" height="14" viewBox="0 0 34 14"><path d="M2 7H20" stroke="#605e5c" stroke-width="1.600"/><circle cx="24.800" cy="7" r="6" fill="#605e5c"/></svg>
<div class="abs" style="left:879px;top:646px;width:180px;height:1px;background:#e1dfdd"></div>
<svg class="abs" style="left:886px;top:626px" width="12" height="8" viewBox="0 0 12 8" fill="none"><path d="M0.800 1L6 6.200L11.200 1" stroke="#3b3a39" stroke-width="1"/></svg>
<div class="t fr" style="left:905.200px;top:623px;letter-spacing:-0.12px">Backgrou...</div>
<div class="t fr" style="left:981px;top:623px">On</div>
<svg class="abs" style="left:1000px;top:623px" width="34" height="14" viewBox="0 0 34 14"><path d="M2 7H20" stroke="#605e5c" stroke-width="1.600"/><circle cx="24.800" cy="7" r="6" fill="#605e5c"/></svg>
<div class="abs" style="left:1054px;top:412px;width:5px;height:162px;background:#c8c6c4;border-radius:2.500px"></div>
<div class="t hd" id="fldhd" style="left:1072.300px;top:139.500px;letter-spacing:-0.280px">Fields</div>
<div class="abs" style="left:1064px;top:177px;width:130px;height:29px;background:#fff;border:1px solid #c8c6c4;border-radius:3px"></div>
<svg class="abs" style="left:1074px;top:181px" width="20" height="20" viewBox="0 0 20 20" fill="none"><circle cx="11.800" cy="7.300" r="5" stroke="#3b3a39" stroke-width="1.100"/><path d="M8.300 10.800L2 17" stroke="#3b3a39" stroke-width="1.200"/></svg>
<div class="t" id="s2" style="left:1100px;top:184.500px;font-size:11.800px">Search</div>
<div class="abs" style="left:1060px;top:210px;width:114px;height:1px;background:#e1dfdd"></div>
<div class="abs" id="flist" style="left:1060px;top:219.3px;width:114px;height:441px;overflow:hidden">
<div class="abs" style="left:32px;top:-6.3px;width:12px;height:12px;background:#f5f4f3;border:1px solid #686664;border-radius:2px"></div>
<div class="t sg" style="left:48.500px;top:-8.300000000000017px">&Sigma;</div>
<div class="t fl" style="left:69px;top:-6.300000000000017px">Age</div>
<svg class="abs" style="left:11.500px;top:19.799999999999983px" width="13" height="8" viewBox="0 0 13 8" fill="none"><path d="M0.800 1L6.500 6.700L12.200 1" stroke="#605e5c" stroke-width="1"/></svg>
<div class="abs" style="left:32px;top:17.7px;width:12px;height:12px;background:#f5f4f3;border:1px solid #686664;border-radius:2px"></div>
<svg class="abs" style="left:48px;top:16.7px" width="13" height="14" viewBox="0 0 13 14" fill="none"><rect x="0.600" y="1.600" width="10.800" height="10.800" rx="0.800" fill="#fff" stroke="#1b1a19" stroke-width="1.200"/><path d="M0.600 4.600H11.400" stroke="#1b1a19" stroke-width="1.200"/><path d="M2.500 0V3.200M9.500 0V3.200" stroke="#1b1a19" stroke-width="1.100"/><g fill="#000"><rect x="2.100" y="6.100" width="1.900" height="1.900" rx="0.400"/><rect x="5.100" y="6.100" width="1.900" height="1.900" rx="0.400"/><rect x="8.100" y="6.100" width="1.900" height="1.900" rx="0.400"/><rect x="2.100" y="9.100" width="1.900" height="1.900" rx="0.400"/><rect x="5.100" y="9.100" width="1.900" height="1.900" rx="0.400"/><rect x="8.100" y="9.100" width="1.900" height="1.900" rx="0.400"/></g></svg>
<div class="t fl" style="left:69px;top:17.69999999999998px">Date</div>
<div class="abs" style="left:32px;top:41.7px;width:12px;height:12px;background:#f5f4f3;border:1px solid #686664;border-radius:2px"></div>
<div class="t sg" style="left:48.500px;top:39.70000000000001px">&Sigma;</div>
<div class="t fl" style="left:69px;top:41.70000000000001px">Day<span style="letter-spacing:-1.600px">_</span>month</div>
<div class="abs" style="left:32px;top:65.7px;width:12px;height:12px;background:#f5f4f3;border:1px solid #686664;border-radius:2px"></div>
<div class="t fl" style="left:69px;top:65.70000000000002px">Education</div>
<div class="abs" style="left:32px;top:89.7px;width:12px;height:12px;background:#f5f4f3;border:1px solid #686664;border-radius:2px"></div>
<div class="t sg" style="left:48.500px;top:87.70000000000002px">&Sigma;</div>
<div class="t fl" style="left:69px;top:89.70000000000002px">Feedback</div>
<div class="abs" style="left:32px;top:113.7px;width:12px;height:12px;background:#f5f4f3;border:1px solid #686664;border-radius:2px"></div>
<div class="t fl" style="left:69px;top:113.70000000000002px">Gender</div>
<svg class="abs" style="left:11.500px;top:139.8px" width="13" height="8" viewBox="0 0 13 8" fill="none"><path d="M0.800 1L6.500 6.700L12.200 1" stroke="#605e5c" stroke-width="1"/></svg>
<div class="abs" style="left:32px;top:137.7px;width:12px;height:12px;background:#f5f4f3;border:1px solid #686664;border-radius:2px"></div>
<svg class="abs" style="left:48px;top:135.7px" width="12" height="16" viewBox="0 0 12 16" fill="none"><rect x="0.500" y="2.500" width="4" height="3" fill="#f2c811" stroke="#252423" stroke-width="1"/><rect x="6.600" y="6.500" width="3.800" height="3" fill="#f2c811" stroke="#252423" stroke-width="1"/><rect x="6.600" y="11.500" width="3.800" height="3" fill="#f2c811" stroke="#252423" stroke-width="1"/><path d="M2 8.500H5M3.500 7V10M2 13.500H5M3.500 12V15" stroke="#252423" stroke-width="1"/></svg>
<div class="t fl" style="left:69px;top:137.70000000000002px">Gender Hierarchy</div>
<div class="abs" style="left:32px;top:161.7px;width:12px;height:12px;background:#f5f4f3;border:1px solid #686664;border-radius:2px"></div>
<div class="t sg" style="left:48.500px;top:159.70000000000002px">&Sigma;</div>
<div class="t fl" style="left:69px;top:161.70000000000002px">Income</div>
<div class="abs" style="left:32px;top:185.7px;width:12px;height:12px;background:#f5f4f3;border:1px solid #686664;border-radius:2px"></div>
<div class="t sg" style="left:48.500px;top:183.70000000000002px">&Sigma;</div>
<div class="t fl" style="left:69px;top:185.70000000000002px">Interest<span style="letter-spacing:-1.600px">_</span>rate</div>
<div class="abs" style="left:32px;top:209.7px;width:12px;height:12px;background:#f2c811;border-radius:2px"></div><svg class="abs" style="left:32px;top:209.7px" width="12" height="12" viewBox="0 0 12 12" fill="none"><path d="M3 6.200L5 8.200L9 4" stroke="#3b3a39" stroke-width="1"/></svg>
<div class="t sg" style="left:48.500px;top:207.70000000000002px">&Sigma;</div>
<div class="t fl" style="left:69px;top:209.70000000000002px">Loan<span style="letter-spacing:-1.600px">_</span>disbursed</div>
<div class="abs" style="left:32px;top:233.7px;width:12px;height:12px;background:#f5f4f3;border:1px solid #686664;border-radius:2px"></div>
<div class="t fl" style="left:69px;top:233.70000000000002px">Month</div>
<svg class="abs" style="left:11.500px;top:259.8px" width="13" height="8" viewBox="0 0 13 8" fill="none"><path d="M0.800 1L6.500 6.700L12.200 1" stroke="#605e5c" stroke-width="1"/></svg>
<div class="abs" style="left:32px;top:257.7px;width:12px;height:12px;background:#f5f4f3;border:1px solid #686664;border-radius:2px"></div>
<svg class="abs" style="left:48px;top:255.7px" width="12" height="16" viewBox="0 0 12 16" fill="none"><rect x="0.500" y="2.500" width="4" height="3" fill="#f2c811" stroke="#252423" stroke-width="1"/><rect x="6.600" y="6.500" width="3.800" height="3" fill="#f2c811" stroke="#252423" stroke-width="1"/><rect x="6.600" y="11.500" width="3.800" height="3" fill="#f2c811" stroke="#252423" stroke-width="1"/><path d="M2 8.500H5M3.500 7V10M2 13.500H5M3.500 12V15" stroke="#252423" stroke-width="1"/></svg>
<div class="t fl" style="left:69px;top:257.7px">Month Hierarchy</div>
<div class="abs" style="left:32px;top:281.7px;width:12px;height:12px;background:#f5f4f3;border:1px solid #686664;border-radius:2px"></div>
<div class="t sg" style="left:48.500px;top:279.7px">&Sigma;</div>
<div class="t fl" style="left:69px;top:281.7px">Outstanding</div>
<div class="abs" style="left:32px;top:305.7px;width:12px;height:12px;background:#f5f4f3;border:1px solid #686664;border-radius:2px"></div>
<div class="t sg" style="left:48.500px;top:303.7px">&Sigma;</div>
<div class="t fl" style="left:69px;top:305.7px">Promo<span style="letter-spacing:-1.600px">_</span>Code</div>
<div class="abs" style="left:32px;top:329.7px;width:12px;height:12px;background:#f2c811;border-radius:2px"></div><svg class="abs" style="left:32px;top:329.7px" width="12" height="12" viewBox="0 0 12 12" fill="none"><path d="M3 6.200L5 8.200L9 4" stroke="#3b3a39" stroke-width="1"/></svg>
<div class="t fl" style="left:69px;top:329.7px">Purpose</div>
<div class="abs" style="left:32px;top:353.7px;width:12px;height:12px;background:#f5f4f3;border:1px solid #686664;border-radius:2px"></div>
<div class="t sg" style="left:48.500px;top:351.7px">&Sigma;</div>
<div class="t fl" style="left:69px;top:353.7px">Quarter</div>
<div class="abs" style="left:32px;top:377.7px;width:12px;height:12px;background:#f5f4f3;border:1px solid #686664;border-radius:2px"></div>
<div class="t fl" style="left:69px;top:377.7px">Weekday</div>
<div class="abs" style="left:32px;top:401.7px;width:12px;height:12px;background:#f5f4f3;border:1px solid #686664;border-radius:2px"></div>
<div class="t fl" style="left:69px;top:401.7px">Weeknum</div>
<div class="abs" style="left:32px;top:425.7px;width:12px;height:12px;background:#f5f4f3;border:1px solid #686664;border-radius:2px"></div>
<div class="t sg" style="left:48.500px;top:423.7px">&Sigma;</div>
<div class="t fl" style="left:69px;top:425.7px">Year</div>
</div>
<!--PANES-END-->

<!--BOTTOM-START-->
<div class="abs" style="left:0;top:631px;width:878px;height:29px;background:#f3f2f1"></div>
<div class="abs" style="left:0;top:631px;width:30px;height:29px;background:#fff"></div>
<div class="t" id="pg1" style="right:1172.4px;top:641.6px;font-size:12.5px;color:#252423;-webkit-text-stroke:0.3px #252423">Page</div><div class="t" id="pg1b" style="left:4.6px;top:641.6px;font-size:12.5px;color:#252423;-webkit-text-stroke:0.3px #252423;transform:scaleX(0.8);transform-origin:0 0">1</div>
<div class="abs" style="left:30px;top:631px;width:1px;height:29px;background:#bcbcc6"></div>
<div class="abs" style="left:31px;top:633px;width:39px;height:27px;background:#f2c811"></div>
<svg class="abs" style="left:44px;top:643px" width="13" height="13" viewBox="0 0 13 13"><path d="M6.500 1V12M1 6.500H12" stroke="#73737b" stroke-width="3" fill="none"/></svg>
<!--BOTTOM-END-->
</body>
</html>
